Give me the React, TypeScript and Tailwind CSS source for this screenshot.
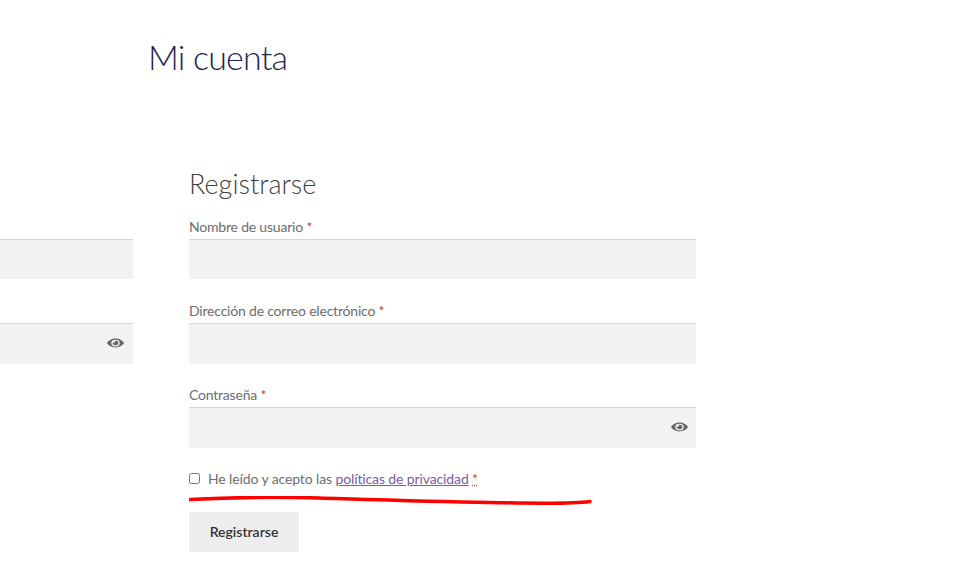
const Eye = ({ color = "#666666" }: { color?: string }) => (
  <svg width="17" height="12" viewBox="0 0 576 512" preserveAspectRatio="none" fill={color} aria-hidden="true">
    <path d="M572.52 241.4C518.29 135.59 410.93 64 288 64S57.68 135.64 3.48 241.41a32.35 32.35 0 0 0 0 29.19C57.71 376.41 165.07 448 288 448s230.32-71.64 284.52-177.41a32.35 32.35 0 0 0 0-29.19zM288 400a144 144 0 1 1 144-144 143.93 143.93 0 0 1-144 144zm0-240a95.31 95.31 0 0 0-25.31 3.79 47.85 47.85 0 0 1-66.9 66.9A95.78 95.78 0 1 0 288 160z" />
  </svg>
);

const Field = ({ label, eye, first }: { label: string; eye?: boolean; first?: boolean }) => (
  <div className={first ? "mb-[21px]" : "mb-[20px]"}>
    <label className="block h-[23px] text-[14px] leading-[21px] tracking-[-0.2px] text-[#6d6d6d]">
      {label} <span className="text-[#e2401c]">*</span>
    </label>
    <div className={`flex items-center justify-end border-t-[1.5px] border-[#d6d6d6] bg-[#f2f2f2] pb-[3px] pr-[8px] ${first ? "h-[40px]" : "h-[41px]"}`}>
      {eye && <Eye />}
    </div>
  </div>
);

export default function App() {
  return (
    <div className="relative h-[586px] w-[974px] overflow-hidden bg-white font-['Lato',sans-serif]">
      <h1 className="ml-[148px] pt-[34px] text-[34px] font-light leading-[46px] tracking-[-0.8px] text-[#25244f]">
        Mi cuenta
      </h1>
      <div className="mt-[82px] flex gap-[56px]">
        <div className="w-[133px] shrink-0 pt-[77px]">
          <div className="mb-[44px] h-[40px] border-t-[1.5px] border-[#d6d6d6] bg-[#f2f2f2]" />
          <div className="flex h-[41px] items-center justify-end border-t-[1.5px] border-[#d6d6d6] bg-[#f2f2f2] pb-[3px] pr-[9px]">
            <Eye />
          </div>
        </div>
        <div className="w-[507px]">
          <h2 className="h-[54px] text-[27px] font-light leading-[43px] text-[#3f3f3f]">
            Registrarse
          </h2>
          <Field label="Nombre de usuario" first />
          <Field label="Dirección de correo electrónico" />
          <Field label="Contraseña" eye />
          <div className="flex h-[20px] items-center text-[14px] tracking-[-0.12px] text-[#6d6d6d]">
            <input type="checkbox" className="mr-[8px] h-[11px] w-[11px]" />
            <span>
              He leído y acepto las{" "}
              <a className="text-[#7b5aa6] underline">políticas de privacidad</a>{" "}
              <span className="text-[#e2401c] underline decoration-dotted">*</span>
            </span>
          </div>
          <button className="mt-[24px] h-[40px] w-[110px] bg-[#eeeeee] pb-[2px] text-[14px] font-semibold text-[#333333]">
            Registrarse
          </button>
        </div>
      </div>
      <svg className="absolute left-[189px] top-[496px]" width="403" height="12" viewBox="0 0 403 12" fill="none" aria-hidden="true">
        <path d="M1 3.5C40 1.5 90 0.8 130 2C180 3.5 240 5.5 300 6.5C340 7.2 380 8.5 401 5.5" stroke="#ff0000" strokeWidth="3.5" strokeLinecap="round" />
      </svg>
    </div>
  );
}
